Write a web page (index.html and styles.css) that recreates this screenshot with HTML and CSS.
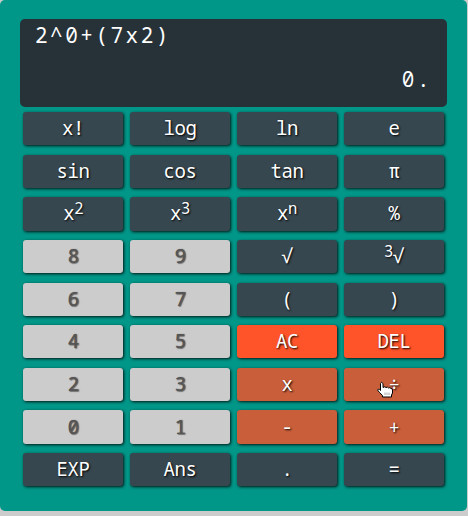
FILE: index.html
```html
<!DOCTYPE html>
<html lang="en">
<head>
<meta charset="utf-8">
<title>Calculator</title>
<link rel="stylesheet" href="styles.css">
</head>
<body>
<main class="calculator">
  <section class="display">
    <div class="expression">2^0+(7x2)</div>
    <div class="result">0.</div>
  </section>
  <section class="keys">
    <button class="key">x!</button>
    <button class="key">log</button>
    <button class="key">ln</button>
    <button class="key">e</button>
    <button class="key">sin</button>
    <button class="key">cos</button>
    <button class="key">tan</button>
    <button class="key">π</button>
    <button class="key">x<sup>2</sup></button>
    <button class="key">x<sup>3</sup></button>
    <button class="key">x<sup>n</sup></button>
    <button class="key">%</button>
    <button class="key number">8</button>
    <button class="key number">9</button>
    <button class="key">√</button>
    <button class="key"><sup>3</sup>√</button>
    <button class="key number">6</button>
    <button class="key number">7</button>
    <button class="key">(</button>
    <button class="key">)</button>
    <button class="key number">4</button>
    <button class="key number">5</button>
    <button class="key clear">AC</button>
    <button class="key clear">DEL</button>
    <button class="key number">2</button>
    <button class="key number">3</button>
    <button class="key operator">x</button>
    <button class="key operator">÷
      <svg class="pointer" viewBox="0 0 16 17" width="16" height="17">
        <path d="M3.500 9.500V2.500Q4.500 0 6 2.500V6.500Q8 5 9 6.500Q10.500 5.500 11.500 7Q13 6 14 7.500Q15.500 7.500 15.500 9V12L14.500 14V16H5.500V14.500L2.500 11.500L.5 9Q1 7.500 2.500 8.500L3.500 9.500Z" fill="#fff" stroke="#000"/>
        <path d="M8 11.500V14M10 11.500V14M12 11.500V14" stroke="#aaa" fill="none"/>
      </svg>
    </button>
    <button class="key number">0</button>
    <button class="key number">1</button>
    <button class="key operator">-</button>
    <button class="key operator">+</button>
    <button class="key">EXP</button>
    <button class="key">Ans</button>
    <button class="key">.</button>
    <button class="key">=</button>
  </section>
</main>
</body>
</html>
```
FILE: styles.css
```css
* { box-sizing: border-box; }
body {
  margin: 0;
  background: #ccc;
  font-family: "Noto Sans Mono", "Noto Sans Mono CJK SC", "DejaVu Sans Mono", monospace;
}
.calculator {
  width: 467px;
  height: 511px;
  padding: 19px 20px 24px;
  border-radius: 5px;
  background: #009688;
}
.display {
  height: 88px;
  padding: 0 15px;
  border-radius: 5px;
  background: #263238;
  color: #fff;
  font-size: 21px;
  line-height: 33px;
  letter-spacing: 2.5px;
}
.result {
  margin-top: 11px;
  text-align: right;
}
.keys {
  display: grid;
  grid-template-columns: repeat(4, 1fr);
  grid-auto-rows: 33.3px;
  gap: 9.33px 6.7px;
  padding: 5px 3px 0;
}
.key {
  position: relative;
  min-width: 0;
  padding: 0;
  border: 0;
  border-radius: 3px;
  background: #37474f;
  color: #fff;
  font: inherit;
  font-size: 19px;
  line-height: 33px;
  letter-spacing: -.4px;
  text-shadow: 1px 1px 2px #000;
  box-shadow: 1px 1px 3px rgba(0, 0, 0, .85);
}
.key sup {
  font-size: 15.5px;
  line-height: 0;
  vertical-align: 6px;
}
.number {
  background: #ccc;
  color: #555;
  text-shadow: 1px 0 1px #555, 1px 1px 1px #777;
}
.clear { background: #ff5429; }
.operator { background: #c95e3a; }
.pointer {
  position: absolute;
  left: 33px;
  top: 13px;
}
```
